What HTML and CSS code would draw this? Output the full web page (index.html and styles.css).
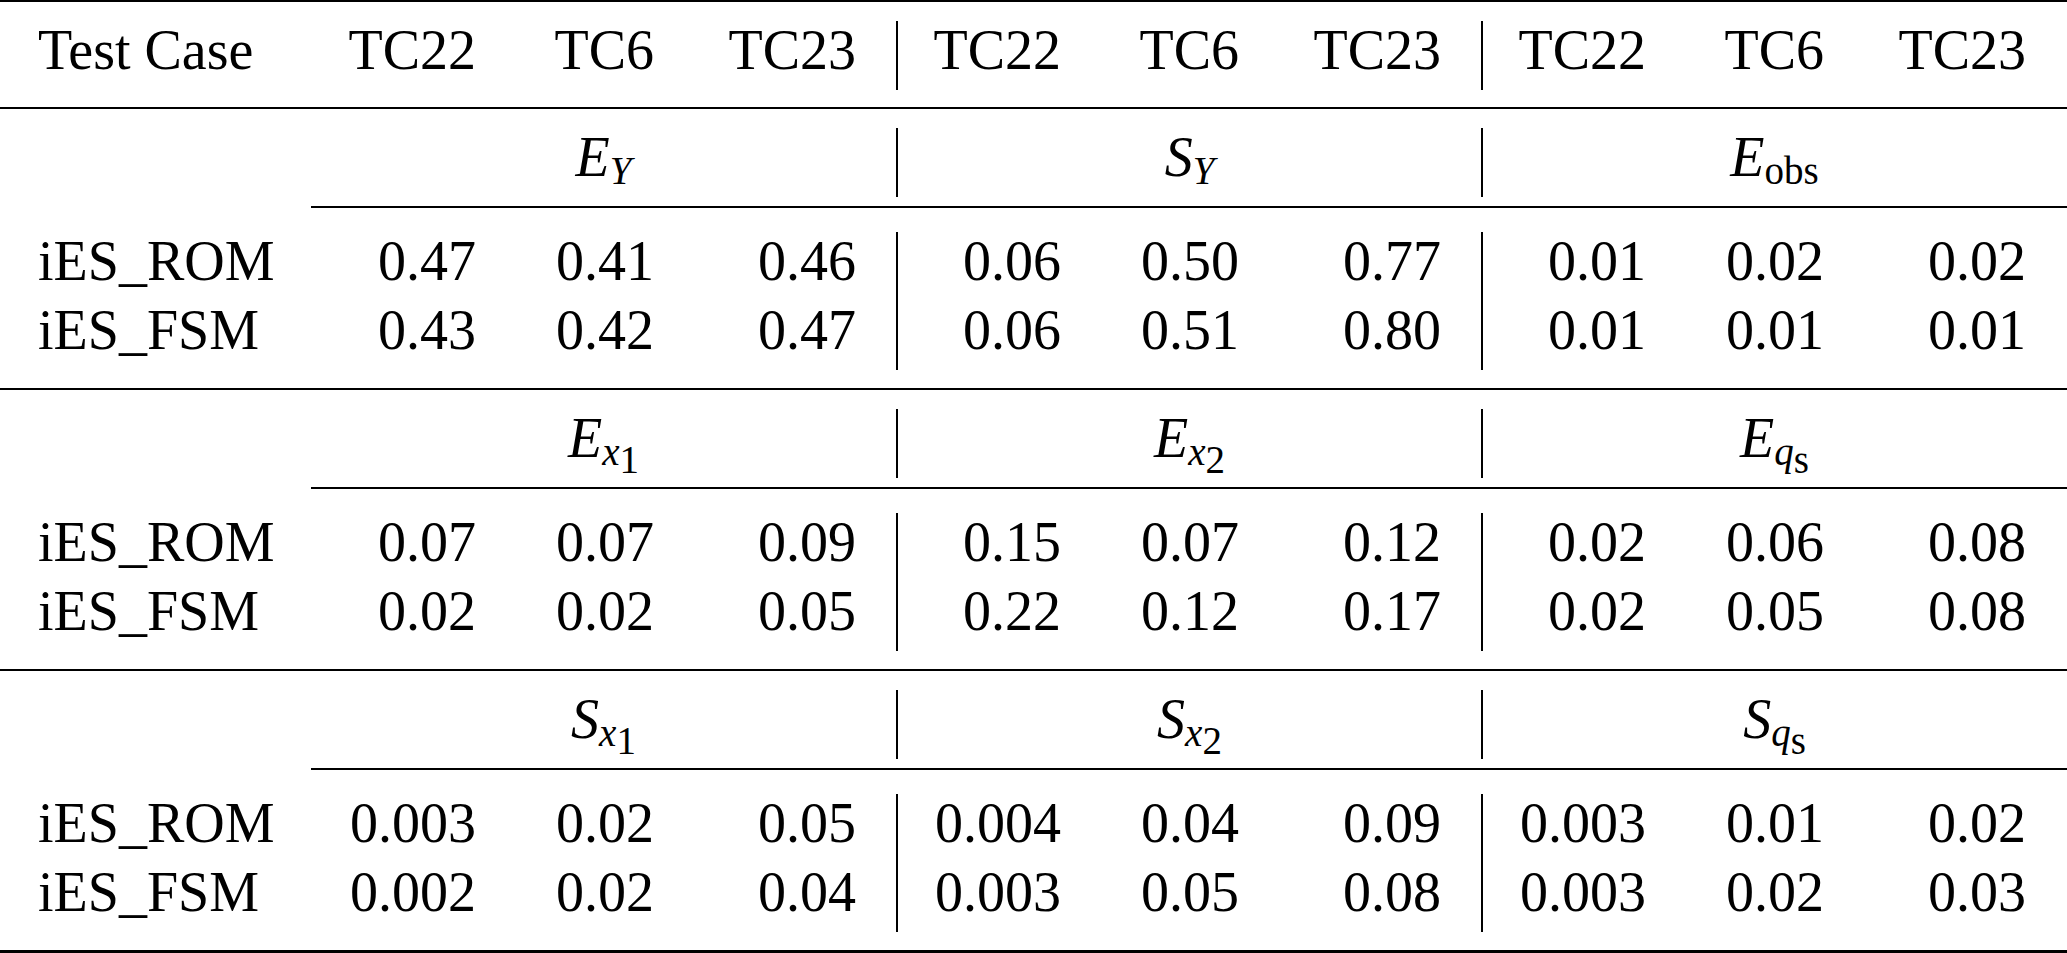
FILE: index.html
```html
<!DOCTYPE html>
<html lang="en">
<head>
    <meta charset="UTF-8">
    <meta name="viewport" content="width=device-width, initial-scale=1.0">
    <title>Error Table</title>
    <link rel="stylesheet" href="styles.css">
</head>
<body>
    <div class="table">
        <div class="rule top"></div>
        <div class="row head">
            <div class="label">Test Case</div>
            <div class="group"><span>TC22</span><span>TC6</span><span>TC23</span></div>
            <div class="group sep"><span>TC22</span><span>TC6</span><span>TC23</span></div>
            <div class="group sep"><span>TC22</span><span>TC6</span><span>TC23</span></div>
        </div>
        <div class="rule"></div>

        <div class="block">
            <div class="row">
                <div class="label"></div>
                <div class="group"><span class="title"><i>E</i><sub><i>Y</i></sub></span></div>
                <div class="group sep"><span class="title"><i>S</i><sub><i>Y</i></sub></span></div>
                <div class="group sep"><span class="title"><i>E</i><sub>obs</sub></span></div>
            </div>
            <div class="cline"></div>
            <div class="data">
                <div class="row">
                    <div class="label">iES_ROM</div>
                    <div class="group"><span>0.47</span><span>0.41</span><span>0.46</span></div>
                    <div class="group sep"><span>0.06</span><span>0.50</span><span>0.77</span></div>
                    <div class="group sep"><span>0.01</span><span>0.02</span><span>0.02</span></div>
                </div>
                <div class="row">
                    <div class="label">iES_FSM</div>
                    <div class="group"><span>0.43</span><span>0.42</span><span>0.47</span></div>
                    <div class="group sep"><span>0.06</span><span>0.51</span><span>0.80</span></div>
                    <div class="group sep"><span>0.01</span><span>0.01</span><span>0.01</span></div>
                </div>
            </div>
        </div>
        <div class="rule"></div>

        <div class="block">
            <div class="row">
                <div class="label"></div>
                <div class="group"><span class="title"><i>E</i><sub><i>x</i><sub>1</sub></sub></span></div>
                <div class="group sep"><span class="title"><i>E</i><sub><i>x</i><sub>2</sub></sub></span></div>
                <div class="group sep"><span class="title"><i>E</i><sub><i>q</i><sub>s</sub></sub></span></div>
            </div>
            <div class="cline"></div>
            <div class="data">
                <div class="row">
                    <div class="label">iES_ROM</div>
                    <div class="group"><span>0.07</span><span>0.07</span><span>0.09</span></div>
                    <div class="group sep"><span>0.15</span><span>0.07</span><span>0.12</span></div>
                    <div class="group sep"><span>0.02</span><span>0.06</span><span>0.08</span></div>
                </div>
                <div class="row">
                    <div class="label">iES_FSM</div>
                    <div class="group"><span>0.02</span><span>0.02</span><span>0.05</span></div>
                    <div class="group sep"><span>0.22</span><span>0.12</span><span>0.17</span></div>
                    <div class="group sep"><span>0.02</span><span>0.05</span><span>0.08</span></div>
                </div>
            </div>
        </div>
        <div class="rule"></div>

        <div class="block">
            <div class="row">
                <div class="label"></div>
                <div class="group"><span class="title"><i>S</i><sub><i>x</i><sub>1</sub></sub></span></div>
                <div class="group sep"><span class="title"><i>S</i><sub><i>x</i><sub>2</sub></sub></span></div>
                <div class="group sep"><span class="title"><i>S</i><sub><i>q</i><sub>s</sub></sub></span></div>
            </div>
            <div class="cline"></div>
            <div class="data">
                <div class="row">
                    <div class="label">iES_ROM</div>
                    <div class="group"><span>0.003</span><span>0.02</span><span>0.05</span></div>
                    <div class="group sep"><span>0.004</span><span>0.04</span><span>0.09</span></div>
                    <div class="group sep"><span>0.003</span><span>0.01</span><span>0.02</span></div>
                </div>
                <div class="row">
                    <div class="label">iES_FSM</div>
                    <div class="group"><span>0.002</span><span>0.02</span><span>0.04</span></div>
                    <div class="group sep"><span>0.003</span><span>0.05</span><span>0.08</span></div>
                    <div class="group sep"><span>0.003</span><span>0.02</span><span>0.03</span></div>
                </div>
            </div>
        </div>
        <div class="rule bottom"></div>
    </div>
</body>
</html>
```

FILE: styles.css
```css
body {
    margin: 0;
    padding: 0;
    background-color: #fff;
    color: #000;
    font-family: 'Liberation Serif', 'Times New Roman', serif;
    font-size: 56px;
}
.table {
    width: 2067px;
}
.rule {
    height: 2px;
    background-color: #000;
    margin-top: 18px;
}
.rule.top {
    margin-top: 0;
}
.rule.bottom {
    height: 3px;
}
.head {
    margin-top: 19px;
    margin-bottom: -1px;
}
.block {
    padding-top: 19px;
}
.row {
    display: grid;
    grid-template-columns: 311px repeat(3, 585px);
    height: 69px;
    line-height: 58px;
}
.label {
    padding-left: 38px;
    white-space: nowrap;
}
.group {
    display: grid;
    grid-template-columns: 205px 178px 202px;
}
.group.sep {
    border-left: 2px solid #000;
    grid-template-columns: 203px 178px 202px;
}
.group span {
    text-align: right;
    padding-right: 40px;
    white-space: nowrap;
}
.group .title {
    grid-column: 1 / -1;
    text-align: center;
    padding: 0;
}
.title i {
    font-style: italic;
}
sub {
    font-size: 39px;
    vertical-align: -8px;
    line-height: 0;
}
sub sub {
    font-size: 39px;
    vertical-align: -8px;
}
.cline {
    height: 2px;
    margin: 9px 0 0 311px;
    background-color: #000;
}
.data {
    margin-top: 24px;
}
```
